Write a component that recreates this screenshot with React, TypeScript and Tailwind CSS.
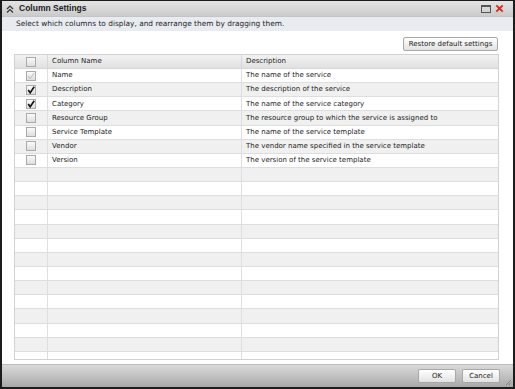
import React from 'react';

const rows = [
  { name: 'Name', desc: 'The name of the service', state: 'disabled' },
  { name: 'Description', desc: 'The description of the service', state: 'checked' },
  { name: 'Category', desc: 'The name of the service category', state: 'checked' },
  { name: 'Resource Group', desc: 'The resource group to which the service is assigned to', state: 'empty' },
  { name: 'Service Template', desc: 'The name of the service template', state: 'empty' },
  { name: 'Vendor', desc: 'The vendor name specified in the service template', state: 'empty' },
  { name: 'Version', desc: 'The version of the service template', state: 'empty' },
];

function Checkbox({ state }: { state: string }) {
  return (
    <span className="relative block w-[10px] h-[10px] border border-[#aaaaaa] bg-gradient-to-b from-[#fafafa] to-[#dedede]">
      {state !== 'empty' && (
        <svg viewBox="0 0 10 10" className="absolute left-[0px] top-[0px] w-[8px] h-[8px]">
          <path
            d="M1.5 5 L4 8.5 L9 1"
            fill="none"
            stroke={state === 'checked' ? '#111' : '#b8b8b8'}
            strokeWidth={state === 'checked' ? 2 : 1.2}
          />
        </svg>
      )}
    </span>
  );
}

function Button({ children, className }: { children: React.ReactNode; className?: string }) {
  return (
    <button className={`h-[14px] border border-[#a8a8a8] rounded-[2px] bg-gradient-to-b from-[#ffffff] to-[#e2e2e2] text-[7px] text-[#222] leading-none flex items-center justify-center ${className ?? ''}`}>
      {children}
    </button>
  );
}

export default function App() {
  const empty = Array.from({ length: 14 });

  return (
    <div className="w-[515px] h-[389px] flex flex-col bg-white border-t border-x-2 border-b-2 border-[#1c1c1c] font-['DejaVu_Sans',sans-serif] text-[#222]">
      <div className="h-[16px] flex items-center bg-gradient-to-b from-[#e4e4e4] to-[#cbcbcb] border-b border-[#c4c4c4]">
        <svg viewBox="0 0 8 8" className="ml-[4px] w-[8px] h-[8px]">
          <path d="M1 4 L4 1 L7 4 M1 7.5 L4 4.5 L7 7.5" fill="none" stroke="#333" strokeWidth="1.2" />
        </svg>
        <span className="ml-[5px] text-[8.5px] font-bold text-[#222] font-['Liberation_Sans',sans-serif]">Column Settings</span>
        <div className="ml-auto mr-[9px] flex items-center gap-[4px]">
          <span className="block w-[10px] h-[8px] border border-[#555] border-t-2" />
          <svg viewBox="0 0 10 10" className="w-[9px] h-[9px]">
            <path d="M1.5 1.5 L8.5 8.5 M8.5 1.5 L1.5 8.5" stroke="#e2231a" strokeWidth="2" />
          </svg>
        </div>
      </div>
      <div className="h-[14px] flex items-center pl-[14px] bg-[#e8ecf1] text-[7.4px] text-[#222]">
        Select which columns to display, and rearrange them by dragging them.
      </div>
      <div className="flex-1 flex flex-col px-[12px] pt-[6px]">
        <div className="flex justify-end mr-[3px]">
          <Button className="w-[95px]">Restore default settings</Button>
        </div>
        <div className="mt-[3px] w-[485px] h-[306px] overflow-hidden border border-[#d2d2d2] text-[7px]">
          <div className="flex h-[14px] bg-gradient-to-b from-[#f2f2f2] to-[#e1e1e1] border-b border-[#d6d6d6]">
            <div className="w-[33px] flex items-center justify-center border-r border-[#d6d6d6]">
              <Checkbox state="empty" />
            </div>
            <div className="w-[194px] flex items-center pl-[4px] border-r border-[#d6d6d6]">Column Name</div>
            <div className="flex-1 flex items-center pl-[4px]">Description</div>
          </div>
          {rows.map((r, i) => (
            <div
              key={r.name}
              className={`flex h-[14.15px] border-b border-[#dedede] ${i % 2 === 0 ? 'bg-white' : 'bg-[#f0f0f0]'}`}
            >
              <div className="w-[33px] flex items-center justify-center border-r border-[#dedede]">
                <Checkbox state={r.state} />
              </div>
              <div className="w-[194px] flex items-center pl-[4px] border-r border-[#dedede]">{r.name}</div>
              <div className="flex-1 flex items-center pl-[4px]">{r.desc}</div>
            </div>
          ))}
          {empty.map((_, i) => (
            <div
              key={i}
              className={`flex h-[14.15px] border-b border-[#dedede] ${(i + 7) % 2 === 0 ? 'bg-white' : 'bg-[#f0f0f0]'}`}
            >
              <div className="w-[33px] border-r border-[#dedede]" />
              <div className="w-[194px] border-r border-[#dedede]" />
              <div className="flex-1" />
            </div>
          ))}
        </div>
      </div>
      <div className="h-[23px] flex items-center justify-end gap-[6px] pr-[13px] border-t border-[#bdbdbd] bg-gradient-to-b from-[#dadada] to-[#a9a9a9] relative">
        <Button className="w-[38px]">OK</Button>
        <Button className="w-[38px]">Cancel</Button>
        <svg viewBox="0 0 8 8" className="absolute right-[1px] bottom-[1px] w-[8px] h-[8px]">
          <path d="M7 2 L2 7 M7 4.5 L4.5 7" stroke="#7a7a7a" strokeWidth="0.8" />
        </svg>
      </div>
    </div>
  );
}
